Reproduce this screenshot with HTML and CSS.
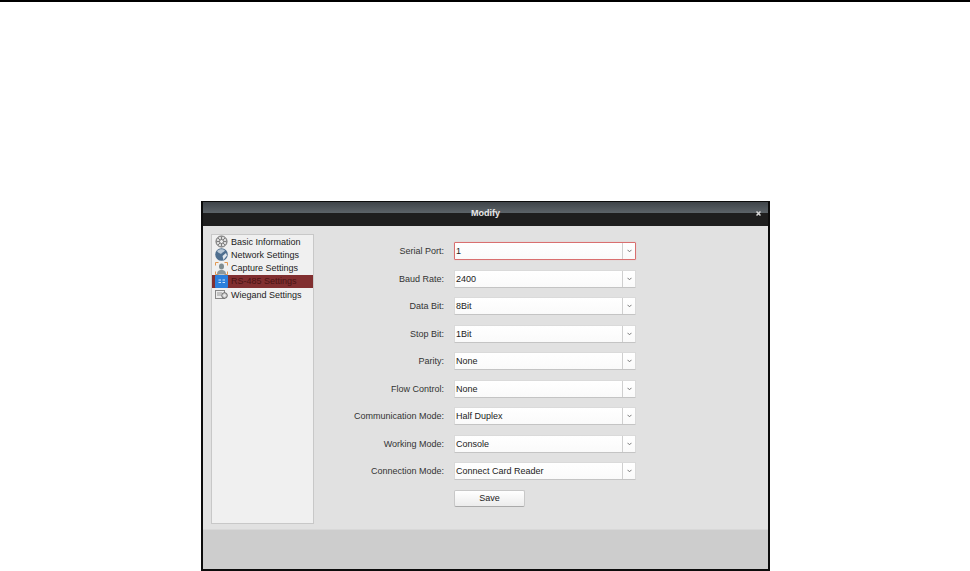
FILE: index.html
```html
<html>
  <head>
    <link rel="stylesheet" href="styles.css">
  </head>
  <body>
    <div class="topline"></div>
    <div class="dialog">
      <div class="titlebar">
        <div class="title">Modify</div>
        <svg class="close" width="5" height="5" viewBox="0 0 5 5"><path d="M.5.5l4 4M4.500.5l-4 4" stroke="#d8d8d8" stroke-width="1.500"/></svg>
      </div>
      <div class="content">
        <div class="sidebar">
          <div class="item">
            <svg class="icon" width="13" height="13" viewBox="0 0 13 13"><circle cx="6.500" cy="6.500" r="5.500" fill="#dcdcdc" stroke="#666"/><path d="M1.500 6.500h10M6.500 1.500v10M3 3l7 7M10 3l-7 7" stroke="#666" stroke-width=".8"/><circle cx="6.500" cy="6.500" r="2" fill="#eee" stroke="#666" stroke-width=".8"/></svg>
            Basic Information
          </div>
          <div class="item">
            <svg class="icon" width="13" height="13" viewBox="0 0 13 13"><circle cx="6.500" cy="6.500" r="6.300" fill="#4f6f8f"/><path d="M2 3c2-2 6-2.500 8-.5-1 2-3 1.500-4 3.500-1-1-3-1-4-3z" fill="#b9c8d6"/><path d="M7.500 8l3.500-3 1 2.500-3.500 4.500z" fill="#e4e9ee"/></svg>
            Network Settings
          </div>
          <div class="item">
            <svg class="icon" width="13" height="13" viewBox="0 0 13 13"><path d="M.5 3.500v-3h3M9.500.5h3v3M.5 9.500v3h3M9.500 12.500h3v-3" fill="none" stroke="#e2974f"/><ellipse cx="6.500" cy="4.500" rx="2.500" ry="3" fill="#7f8c90"/><path d="M2 12.500c0-3.500 2-4.500 4.500-4.500s4.500 1 4.500 4.500z" fill="#8b979b"/></svg>
            Capture Settings
          </div>
          <div class="item selected">
            <svg class="icon" width="13" height="13" viewBox="0 0 13 13"><rect width="13" height="13" rx="1" fill="#2b7fdc"/><path d="M3.500 5h2.500M3.500 7.500h2.500M7.500 5h2.500M7.500 7.500h2.500" stroke="#cfe4fa"/></svg>
            RS-485 Settings
          </div>
          <div class="item">
            <svg class="icon" width="13" height="13" viewBox="0 0 13 13"><rect x=".5" y="2.500" width="9" height="8" fill="#ececec" stroke="#888"/><path d="M2 5h5M2 7h4" stroke="#999"/><circle cx="9.500" cy="7.500" r="2.800" fill="#d4d4d4" stroke="#666"/><circle cx="9.500" cy="7.500" r="1" fill="#f2f2f2"/></svg>
            Wiegand Settings
          </div>
        </div>
        <div class="form">
          <div class="row">
            <div class="label">Serial Port:</div>
            <div class="select focused"><span class="value">1</span><span class="arrow"><svg width="5" height="4" viewBox="0 0 5 4"><path d="M.5.8l2 2 2-2" fill="none" stroke="#777"/></svg></span></div>
          </div>
          <div class="row">
            <div class="label">Baud Rate:</div>
            <div class="select"><span class="value">2400</span><span class="arrow"><svg width="5" height="4" viewBox="0 0 5 4"><path d="M.5.8l2 2 2-2" fill="none" stroke="#777"/></svg></span></div>
          </div>
          <div class="row">
            <div class="label">Data Bit:</div>
            <div class="select"><span class="value">8Bit</span><span class="arrow"><svg width="5" height="4" viewBox="0 0 5 4"><path d="M.5.8l2 2 2-2" fill="none" stroke="#777"/></svg></span></div>
          </div>
          <div class="row">
            <div class="label">Stop Bit:</div>
            <div class="select"><span class="value">1Bit</span><span class="arrow"><svg width="5" height="4" viewBox="0 0 5 4"><path d="M.5.8l2 2 2-2" fill="none" stroke="#777"/></svg></span></div>
          </div>
          <div class="row">
            <div class="label">Parity:</div>
            <div class="select"><span class="value">None</span><span class="arrow"><svg width="5" height="4" viewBox="0 0 5 4"><path d="M.5.8l2 2 2-2" fill="none" stroke="#777"/></svg></span></div>
          </div>
          <div class="row">
            <div class="label">Flow Control:</div>
            <div class="select"><span class="value">None</span><span class="arrow"><svg width="5" height="4" viewBox="0 0 5 4"><path d="M.5.8l2 2 2-2" fill="none" stroke="#777"/></svg></span></div>
          </div>
          <div class="row">
            <div class="label">Communication Mode:</div>
            <div class="select"><span class="value">Half Duplex</span><span class="arrow"><svg width="5" height="4" viewBox="0 0 5 4"><path d="M.5.8l2 2 2-2" fill="none" stroke="#777"/></svg></span></div>
          </div>
          <div class="row">
            <div class="label">Working Mode:</div>
            <div class="select"><span class="value">Console</span><span class="arrow"><svg width="5" height="4" viewBox="0 0 5 4"><path d="M.5.8l2 2 2-2" fill="none" stroke="#777"/></svg></span></div>
          </div>
          <div class="row">
            <div class="label">Connection Mode:</div>
            <div class="select"><span class="value">Connect Card Reader</span><span class="arrow"><svg width="5" height="4" viewBox="0 0 5 4"><path d="M.5.8l2 2 2-2" fill="none" stroke="#777"/></svg></span></div>
          </div>
          <div class="row">
            <div class="label"></div>
            <div class="btn">Save</div>
          </div>
        </div>
      </div>
      <div class="footer"></div>
    </div>
  </body>
</html>
```
FILE: styles.css
```css
body {
  margin: 0;
  background-color: white;
  font-family: "Liberation Sans", Arial, sans-serif;
  font-size: 9px;
  color: #222;
  height: 571px;
  overflow: hidden;
}
.topline {
  height: 2px;
  background-color: black;
  margin-bottom: 199px;
}
.dialog {
  width: 565px;
  height: 367px;
  margin-left: 201px;
  border: 2px solid #0c0c0c;
  border-top-width: 1px;
  display: flex;
  flex-direction: column;
  background-color: #e1e1e1;
}
.titlebar {
  height: 24px;
  flex: none;
  background: linear-gradient(to bottom, #3f4449 0, #5c6368 11px, #1e1e1e 11px, #1e1e1e 24px);
  display: flex;
  align-items: center;
  justify-content: center;
  padding-bottom: 2px;
  box-sizing: border-box;
  position: relative;
  color: #e8e8e8;
  font-weight: bold;
}
.close {
  position: absolute;
  right: 7px;
  top: 9px;
}
.content {
  flex: 1;
  display: flex;
  padding: 8px 0 5px 8px;
  border-bottom: 1px solid #d8d8d8;
}
.sidebar {
  width: 101px;
  background-color: #f0f0f0;
  border: 1px solid #c8c8c8;
}
.item {
  height: 13.25px;
  display: flex;
  align-items: center;
  gap: 3px;
  padding-left: 3px;
}
.item.selected {
  background-color: #812f30;
  color: #4a1414;
}
.icon {
  flex: none;
}
.form {
  flex: 1;
  padding-top: 8px;
}
.row {
  display: flex;
  align-items: center;
  gap: 10px;
  height: 18px;
  margin-bottom: 9.5px;
}
.label {
  width: 130px;
  text-align: right;
  white-space: nowrap;
  color: #333;
}
.select {
  width: 182px;
  height: 18px;
  box-sizing: border-box;
  background: linear-gradient(to bottom, #fff, #fafafa);
  border: 1px solid #dadada;
  border-bottom-color: #c4c4c4;
  border-radius: 1px;
  display: flex;
  align-items: center;
}
.select.focused {
  border-color: #d96f6f;
  box-shadow: 0 0 1px #e8a0a0;
}
.value {
  flex: 1;
  padding-left: 1px;
}
.arrow {
  width: 12px;
  height: 100%;
  border-left: 1px solid #cfcfcf;
  display: flex;
  align-items: center;
  justify-content: center;
}
.btn {
  width: 71px;
  height: 17px;
  box-sizing: border-box;
  background: linear-gradient(to bottom, #fff, #ececec);
  border: 1px solid #c8c8c8;
  border-bottom-color: #aaa;
  border-radius: 2px;
  text-align: center;
  line-height: 15px;
}
.footer {
  height: 39px;
  flex: none;
  background-color: #cdcdcd;
}
```
